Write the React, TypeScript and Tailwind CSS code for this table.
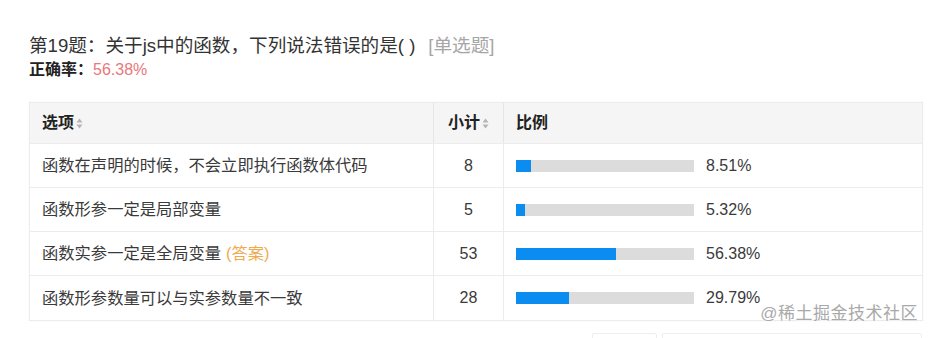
import React from "react";

const font = { fontFamily: '"Liberation Sans", Arial, "Noto Sans CJK SC", sans-serif' };

function SortIcon() {
  return (
    <svg width="7" height="11" viewBox="0 0 7 11" className="ml-[2px] inline-block">
      <path d="M3.5 0.5 L6.5 4.5 H0.5 Z" fill="#b5b5b5" />
      <path d="M3.5 10.5 L6.5 6.5 H0.5 Z" fill="#b5b5b5" />
    </svg>
  );
}

const rows = [
  { text: "函数在声明的时候，不会立即执行函数体代码", count: 8, pct: 8.51, answer: false },
  { text: "函数形参一定是局部变量", count: 5, pct: 5.32, answer: false },
  { text: "函数实参一定是全局变量", count: 53, pct: 56.38, answer: true },
  { text: "函数形参数量可以与实参数量不一致", count: 28, pct: 29.79, answer: false },
];

export default function App() {
  return (
    <div className="relative h-[338px] w-[930px] overflow-hidden bg-white text-[#333]" style={font}>
      <div className="pl-[29px] pt-[34px]">
        <div className="flex items-center text-[18.6px] leading-[24px] text-[#333]">
          <span>第19题：关于js中的函数，下列说法错误的是( )</span>
          <span className="ml-[13px] text-[#a6a6a6]">[单选题]</span>
        </div>
        <div className="mt-[2px] flex items-center text-[16px] leading-[20px]">
          <span className="font-bold text-[#222]">正确率：</span>
          <span className="text-[#e8787a]">56.38%</span>
        </div>

        <div className="mt-[22px] w-[894px] border border-[#ececec] shadow-[0_0_2px_rgba(0,0,0,0.04)]">
          <div className="grid h-[41px] grid-cols-[403px_70px_1fr] border-b border-[#ececec] bg-[#f5f5f5] text-[16px] font-bold text-[#222]">
            <div className="flex items-center pl-[12px]">
              选项<SortIcon />
            </div>
            <div className="flex items-center justify-center border-l border-[#e6e6e6]">
              小计<SortIcon />
            </div>
            <div className="flex items-center border-l border-[#e6e6e6] pl-[12px]">比例</div>
          </div>
          {rows.map((r, i) => (
            <div
              key={i}
              className={
                "grid h-[44px] grid-cols-[403px_70px_1fr] text-[16.3px] " +
                (i < rows.length - 1 ? "border-b border-[#ececec]" : "")
              }
            >
              <div className="flex items-center pl-[12px] text-[#3a3a3a]">
                <span>{r.text}</span>
                {r.answer && <span className="ml-[5px] text-[#eeaa4d]">(答案)</span>}
              </div>
              <div className="flex items-center justify-center border-l border-[#ececec] text-[16px] text-[#3a3a3a]">
                {r.count}
              </div>
              <div className="flex items-center border-l border-[#ececec] pl-[12px]">
                <div className="h-[12px] w-[178px] bg-[#dcdcdc]">
                  <div className="h-full bg-[#0a8cf0]" style={{ width: `${r.pct}%` }} />
                </div>
                <span className="ml-[12px] text-[16px] text-[#3a3a3a]">{r.pct.toFixed(2)}%</span>
              </div>
            </div>
          ))}
        </div>

        <div className="mt-[12px] flex gap-[5px] pl-[563px]">
          <div className="h-[20px] w-[65px] rounded-[2px] border border-[#eeeeee]" />
          <div className="h-[20px] w-[260px] rounded-[2px] border border-[#eeeeee]" />
        </div>
      </div>

      <div
        className="absolute right-[12px] top-[303px] text-[17px] leading-[22px] tracking-[0.5px] text-[#a9a9a9]"
        style={{ textShadow: "0 0 2px #fff, 0 0 2px #fff" }}
      >
        @稀土掘金技术社区
      </div>
    </div>
  );
}
